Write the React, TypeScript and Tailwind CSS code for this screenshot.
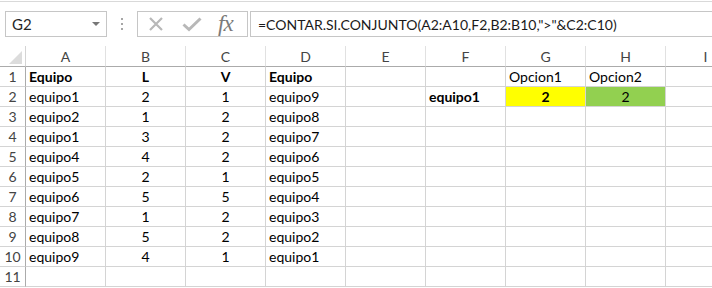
import React from "react";

type Cell = { v?: string; bold?: boolean; center?: boolean; bg?: string };

const cols = ["A", "B", "C", "D", "E", "F", "G", "H", "I"];

const data: [string, string, string, string][] = [
  ["equipo1", "2", "1", "equipo9"],
  ["equipo2", "1", "2", "equipo8"],
  ["equipo1", "3", "2", "equipo7"],
  ["equipo4", "4", "2", "equipo6"],
  ["equipo5", "2", "1", "equipo5"],
  ["equipo6", "5", "5", "equipo4"],
  ["equipo7", "1", "2", "equipo3"],
  ["equipo8", "5", "2", "equipo2"],
  ["equipo9", "4", "1", "equipo1"],
];

const buildRows = (): Cell[][] => {
  const rows: Cell[][] = [];
  rows.push([
    { v: "Equipo", bold: true },
    { v: "L", bold: true, center: true },
    { v: "V", bold: true, center: true },
    { v: "Equipo", bold: true },
    {},
    {},
    { v: "Opcion1" },
    { v: "Opcion2" },
    {},
  ]);
  data.forEach((d, i) => {
    const r: Cell[] = [
      { v: d[0] },
      { v: d[1], center: true },
      { v: d[2], center: true },
      { v: d[3] },
      {},
      {},
      {},
      {},
      {},
    ];
    if (i === 0) {
      r[5] = { v: "equipo1", bold: true };
      r[6] = { v: "2", bold: true, center: true, bg: "bg-[#ffff00]" };
      r[7] = { v: "2", center: true, bg: "bg-[#92d050]" };
    }
    rows.push(r);
  });
  // empty row 11
  rows.push(cols.map(() => ({})));
  return rows;
};

const FormulaBar = () => (
  <div className="flex items-start h-[44px] pt-[9px]">
    {/* Name box */}
    <div className="ml-[5px] w-[102px] h-[26px] border border-[#c6c6c6] flex items-center justify-between pl-[6px] pr-[6px] shrink-0">
      <span className="text-[15px] text-[#262626]">G2</span>
      <span className="w-0 h-0 border-l-[4px] border-r-[4px] border-t-[4px] border-l-transparent border-r-transparent border-t-[#777]" />
    </div>
    {/* Grip dots */}
    <div className="w-[30px] h-[26px] flex flex-col items-center justify-center gap-[3px] shrink-0">
      <span className="w-[2px] h-[2px] bg-[#a6a6a6]" />
      <span className="w-[2px] h-[2px] bg-[#a6a6a6]" />
      <span className="w-[2px] h-[2px] bg-[#a6a6a6]" />
    </div>
    {/* Cancel / Enter / fx */}
    <div className="w-[111px] h-[26px] border border-[#c6c6c6] flex items-center shrink-0">
      <svg width="16" height="16" viewBox="0 0 16 16" className="ml-[10px]">
        <path d="M2 2L14 14M14 2L2 14" stroke="#b8b8b8" strokeWidth="2.2" fill="none" />
      </svg>
      <svg width="20" height="16" viewBox="0 0 20 16" className="ml-[18px]">
        <path d="M1.5 8.5L7 13.5L18.5 2.5" stroke="#b8b8b8" strokeWidth="3" fill="none" />
      </svg>
      <span className="ml-[16px] -mt-[2px] text-[23px] leading-none italic text-[#7a7a7a] font-['Liberation_Serif',serif] tracking-[-1px]">
        fx
      </span>
    </div>
    {/* Formula input */}
    <div className="ml-[2px] flex-1 h-[26px] border-y border-l border-[#c6c6c6] flex items-center pl-[7px] whitespace-nowrap">
      <span className="text-[14px] text-[#1a1a1a]">=CONTAR.SI.CONJUNTO(A2:A10,F2,B2:B10,"&gt;"&amp;C2:C10)</span>
    </div>
  </div>
);

const HeaderRow = () => (
  <div className="flex h-[21px]">
    <div className="w-[26px] shrink-0 border-r border-b border-r-[#d4d4d4] border-b-[#ababab] flex items-end justify-end pr-[3px] pb-[2px]">
      <svg width="13" height="13" viewBox="0 0 13 13">
        <polygon points="13,0 13,13 0,13" fill="#dcdcdc" />
      </svg>
    </div>
    {cols.map((c) => (
      <div
        key={c}
        className="w-[80px] shrink-0 border-r border-b border-r-[#e1e1e1] border-b-[#ababab] flex items-center justify-center text-[14px] text-[#444]"
      >
        {c}
      </div>
    ))}
  </div>
);

const App = () => {
  const rows = buildRows();
  return (
    <div className="w-[712px] h-[288px] overflow-hidden bg-white font-['Lato',sans-serif] text-black">
      <div className="h-px mt-px bg-[#d9d9d9]" />
      <FormulaBar />
      <div className="w-[746px]">
        <HeaderRow />
        {rows.map((r, i) => (
          <div key={i} className="flex h-[20px]">
            <div className="w-[26px] shrink-0 border-r border-b border-r-[#ababab] border-b-[#d4d4d4] flex items-end justify-center pb-[1px] text-[14px] text-[#444] leading-[17px]">
              {i + 1}
            </div>
            {r.map((c, j) => (
              <div
                key={j}
                className={`w-[80px] shrink-0 border-r border-b border-[#d4d4d4] flex items-end pb-[1px] px-[3px] text-[14px] leading-[17px] whitespace-nowrap ${
                  c.center ? "justify-center" : "justify-start"
                } ${c.bold ? "font-bold" : ""} ${c.bg ?? ""}`}
              >
                {c.v}
              </div>
            ))}
          </div>
        ))}
      </div>
    </div>
  );
};

export default App;
